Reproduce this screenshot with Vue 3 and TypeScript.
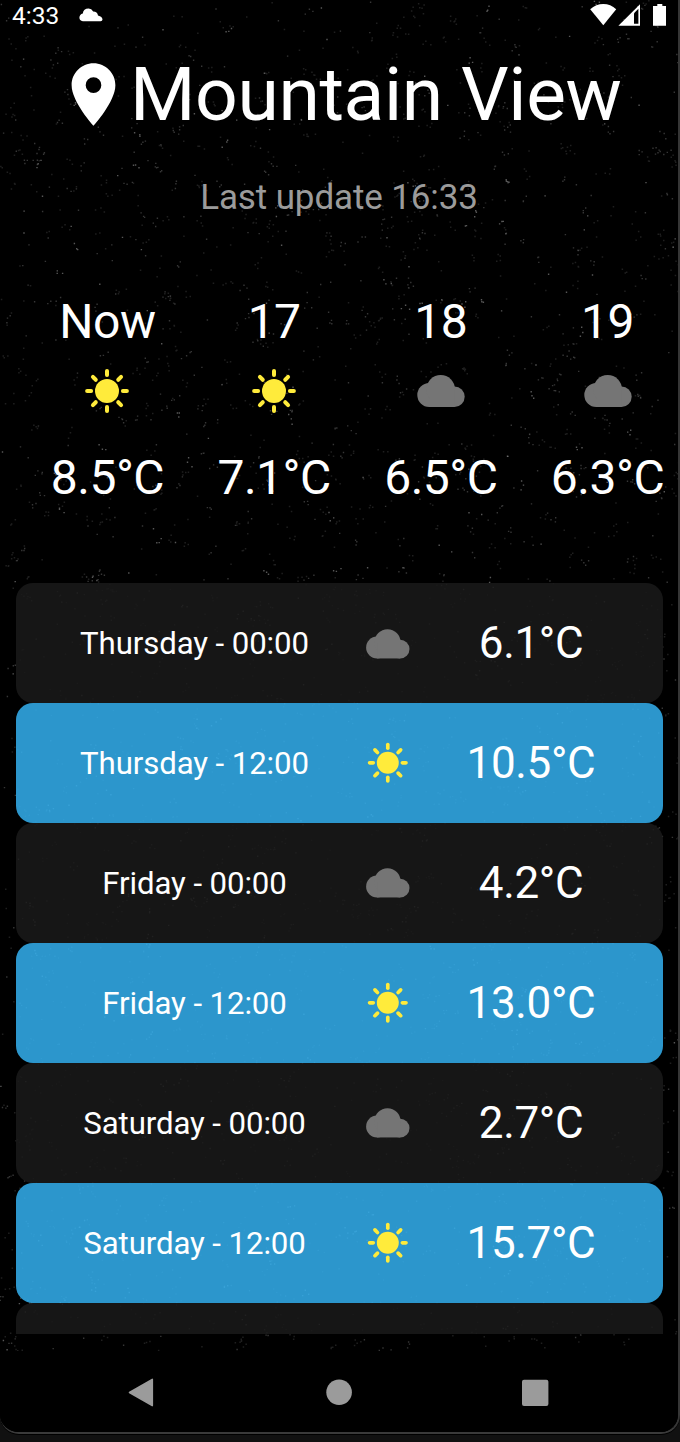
<script setup lang="ts">
type Sky = 'sun' | 'cloud'

interface Forecast {
  label: string
  sky: Sky
  temp: string
}

const hours: Forecast[] = [
  { label: 'Now', sky: 'sun', temp: '8.5°C' },
  { label: '17', sky: 'sun', temp: '7.1°C' },
  { label: '18', sky: 'cloud', temp: '6.5°C' },
  { label: '19', sky: 'cloud', temp: '6.3°C' },
]

const days: Forecast[] = [
  { label: 'Thursday - 00:00', sky: 'cloud', temp: '6.1°C' },
  { label: 'Thursday - 12:00', sky: 'sun', temp: '10.5°C' },
  { label: 'Friday - 00:00', sky: 'cloud', temp: '4.2°C' },
  { label: 'Friday - 12:00', sky: 'sun', temp: '13.0°C' },
  { label: 'Saturday - 00:00', sky: 'cloud', temp: '2.7°C' },
  { label: 'Saturday - 12:00', sky: 'sun', temp: '15.7°C' },
]

const rays = [0, 45, 90, 135, 180, 225, 270, 315]

// Seeded generator so the night sky is the same on every load.
let seed = 90210
function rand(): number {
  seed = (seed + 0x6d2b79f5) | 0
  let t = Math.imul(seed ^ (seed >>> 15), 1 | seed)
  t = (t + Math.imul(t ^ (t >>> 7), 61 | t)) ^ t
  return ((t ^ (t >>> 14)) >>> 0) / 4294967296
}

const starLayers = [
  { opacity: 0.12, count: 1500, size: 1.5 },
  { opacity: 0.21, count: 850, size: 1.4 },
  { opacity: 0.34, count: 280, size: 1.4 },
].map(({ opacity, count, size }) => {
  let d = ''
  for (let i = 0; i < count; i++) {
    let x = rand() * 680
    let y = rand() * 1350
    const cluster = rand() < 0.4 ? 3 : 1
    for (let k = 0; k < cluster; k++) {
      d += `M${x.toFixed(1)} ${y.toFixed(1)}h${size}v${size}h-${size}z`
      x += (rand() - 0.5) * 11
      y += (rand() - 0.5) * 11
    }
  }
  return { opacity, d }
})
</script>

<template>
  <div class="device">
    <div class="screen">
      <svg class="stars" width="678" height="1351" viewBox="0 0 678 1351">
        <path v-for="layer in starLayers" :key="layer.opacity" :d="layer.d" fill="#fff" :fill-opacity="layer.opacity" />
      </svg>

      <header class="status">
        <span class="clock">4:33</span>
        <svg class="status-cloud" width="24" height="14" viewBox="0 0 24 14">
          <path
            d="M3.8 13.2A3.6 3.6 0 0 1 .4 9.6Q.5 6.2 3.8 5.4Q4.4 .4 9.6 .4Q12.6 .4 14.2 3.4Q18.4 3.6 19 7.4Q23.4 8.4 23.5 11.4Q23.4 13.2 21.6 13.2Z"
            fill="#fff"
          />
        </svg>
        <svg class="status-icons" width="78" height="28" viewBox="590 0 78 28">
          <path d="M590.2 9.2Q596 4 603.3 4T616.2 9.2L603.3 25.2Z" fill="#fff" />
          <path d="M618.4 25.7L640 4.2V25.7Z" fill="#fff" />
          <path d="M634 13.2L638.4 8.8V23.7H634Z" fill="#000" />
          <path d="M653 6H657.3V4H662.3V6H666V25.7H653Z" fill="#fff" />
        </svg>
      </header>

      <h1 class="place">
        <svg width="75" height="75" viewBox="0 0 24 24">
          <path
            d="M12 2C8.13 2 5 5.13 5 9c0 5.25 7 13 7 13s7-7.75 7-13c0-3.87-3.13-7-7-7zm0 9.5a2.5 2.5 0 1 1 0-5 2.5 2.5 0 0 1 0 5z"
            fill="#fff"
          />
        </svg>
        <span>Mountain View</span>
      </h1>
      <p class="updated">Last update 16:33</p>

      <section class="hours">
        <div v-for="hour in hours" :key="hour.label" class="hour">
          <span class="hour-label">{{ hour.label }}</span>
          <svg class="sky" viewBox="0 0 52 52">
            <g v-if="hour.sky === 'sun'" fill="#ffeb3b">
              <circle cx="26" cy="26" r="12" />
              <rect v-for="a in rays" :key="a" x="24" y="4.1" width="4" height="8" rx="2" :transform="`rotate(${a} 26 26)`" />
            </g>
            <g v-else fill="#757575">
              <circle cx="14.3" cy="30" r="12" />
              <circle cx="39.5" cy="31.8" r="10.2" />
              <circle cx="25.7" cy="24.3" r="14.3" />
              <rect x="14.3" y="26" width="25.2" height="16" />
            </g>
          </svg>
          <span class="hour-temp">{{ hour.temp }}</span>
        </div>
      </section>

      <section class="days">
        <div v-for="day in days" :key="day.label" class="day" :class="{ noon: day.sky === 'sun' }">
          <span class="day-label">{{ day.label }}</span>
          <svg class="sky" viewBox="0 0 52 52">
            <g v-if="day.sky === 'sun'" fill="#ffeb3b">
              <circle cx="26" cy="26" r="12" />
              <rect v-for="a in rays" :key="a" x="24" y="4.1" width="4" height="8" rx="2" :transform="`rotate(${a} 26 26)`" />
            </g>
            <g v-else fill="#757575">
              <circle cx="14.3" cy="30" r="12" />
              <circle cx="39.5" cy="31.8" r="10.2" />
              <circle cx="25.7" cy="24.3" r="14.3" />
              <rect x="14.3" y="26" width="25.2" height="16" />
            </g>
          </svg>
          <span class="day-temp">{{ day.temp }}</span>
        </div>
        <div class="day"></div>
      </section>

      <nav class="nav">
        <svg width="678" height="81" viewBox="0 0 678 81" fill="#9b9b9b">
          <path d="M129.5 41.5L152.3 28.4V54.6Z" stroke="#9b9b9b" stroke-width="1.6" stroke-linejoin="round" />
          <circle cx="339.1" cy="41.3" r="12.8" />
          <rect x="522" y="28.7" width="26.4" height="26.3" rx="2" />
        </svg>
      </nav>
    </div>
  </div>
</template>

<style>
body {
  margin: 0;
  background: #111;
}
</style>

<style scoped>
.device {
  box-sizing: border-box;
  width: 680px;
  height: 1442px;
  overflow: hidden;
  background: #111;
  font-family: Roboto, 'Liberation Sans', sans-serif;
  color: #fff;
}

.screen {
  position: relative;
  display: flex;
  flex-direction: column;
  width: 678px;
  height: 1432px;
  overflow: hidden;
  background: #000;
  border-right: 2px solid #363636;
  border-bottom: 2px solid #3a3a3a;
  border-radius: 0 0 19px 19px;
  box-shadow: 0 1px 0 #000;
}

.stars {
  position: absolute;
  inset: 0;
}

.status,
.place,
.updated,
.hours,
.days,
.nav {
  position: relative;
  flex: none;
}

.status {
  display: flex;
  height: 50px;
}

.clock {
  width: 67px;
  padding-left: 12px;
  box-sizing: border-box;
  margin-right: 11.5px;
  font-size: 24.5px;
  line-height: 31px;
}

.status-cloud {
  margin-top: 7.5px;
}

.status-icons {
  margin-left: auto;
  margin-right: 10px;
}

.place {
  display: flex;
  align-items: center;
  height: 88.6px;
  margin: 0;
  padding-left: 56px;
  font-size: 75px;
  line-height: 88.6px;
  font-weight: 400;
  letter-spacing: -0.4px;
  white-space: nowrap;
}

.place svg {
  flex: none;
  margin-right: -1px;
}

.updated {
  margin: 39.7px 0 0;
  font-size: 35px;
  line-height: 40px;
  letter-spacing: -0.12px;
  text-align: center;
  color: #9b9b9b;
}

.hours {
  display: flex;
  box-sizing: border-box;
  height: 295.3px;
  margin-top: 69.9px;
  padding-left: 24.1px;
  overflow: hidden;
}

.hour {
  flex: none;
  display: flex;
  flex-direction: column;
  align-items: center;
  width: 166.7px;
  font-size: 48px;
  letter-spacing: -0.5px;
}

.hour-label {
  line-height: 66px;
  padding-top: 0.6px;
}

.hour .sky {
  width: 52px;
  height: 52px;
  margin: 10.4px 0 31.1px;
}

.hour-temp {
  line-height: 60px;
}

.days {
  width: 647px;
  height: 750.1px;
  margin: 0 13px 0 16px;
  overflow: hidden;
}

.day {
  display: grid;
  grid-template-columns: 357px 29px 258px;
  align-items: center;
  justify-items: center;
  height: 119.87px;
  border-radius: 17px;
  background: rgba(25, 25, 25, 0.87);
}

.day.noon {
  background: rgba(51, 173, 235, 0.867);
}

.day .sky {
  width: 47.6px;
  height: 47.6px;
}

.day-label {
  padding-top: 2.2px;
  font-size: 31.2px;
  line-height: 40px;
  letter-spacing: -0.1px;
}

.day-temp {
  font-size: 44px;
  line-height: 54px;
  letter-spacing: -0.35px;
}

.nav {
  margin-top: auto;
  height: 81px;
  background: #000;
}

.nav svg {
  display: block;
}
</style>
